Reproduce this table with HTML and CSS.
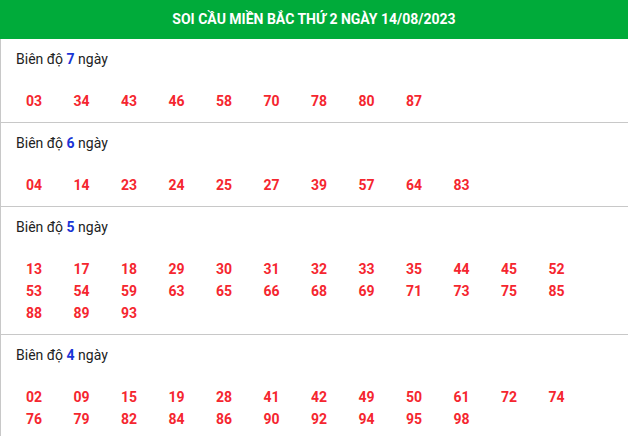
FILE: index.html
```html
<!DOCTYPE html>
<html lang="vi">
<head>
    <meta charset="UTF-8">
    <meta name="viewport" content="width=device-width, initial-scale=1.0">
    <title>Soi cầu miền Bắc</title>
    <link rel="stylesheet" href="styles.css">
</head>
<body>
    <div class="box">
        <h2 class="box-title">SOI CẦU MIỀN BẮC THỨ 2 NGÀY 14/08/2023</h2>
        <div class="range">
            <p class="range-label">Biên độ <b>7</b> ngày</p>
            <div class="nums">
                <span>03</span><span>34</span><span>43</span><span>46</span><span>58</span><span>70</span><span>78</span><span>80</span><span>87</span>
            </div>
        </div>
        <div class="range">
            <p class="range-label">Biên độ <b>6</b> ngày</p>
            <div class="nums">
                <span>04</span><span>14</span><span>23</span><span>24</span><span>25</span><span>27</span><span>39</span><span>57</span><span>64</span><span>83</span>
            </div>
        </div>
        <div class="range">
            <p class="range-label">Biên độ <b>5</b> ngày</p>
            <div class="nums">
                <span>13</span><span>17</span><span>18</span><span>29</span><span>30</span><span>31</span><span>32</span><span>33</span><span>35</span><span>44</span><span>45</span><span>52</span>
                <span>53</span><span>54</span><span>59</span><span>63</span><span>65</span><span>66</span><span>68</span><span>69</span><span>71</span><span>73</span><span>75</span><span>85</span>
                <span>88</span><span>89</span><span>93</span>
            </div>
        </div>
        <div class="range">
            <p class="range-label">Biên độ <b>4</b> ngày</p>
            <div class="nums">
                <span>02</span><span>09</span><span>15</span><span>19</span><span>28</span><span>41</span><span>42</span><span>49</span><span>50</span><span>61</span><span>72</span><span>74</span>
                <span>76</span><span>79</span><span>82</span><span>84</span><span>86</span><span>90</span><span>92</span><span>94</span><span>95</span><span>98</span>
            </div>
        </div>
    </div>
</body>
</html>
```

FILE: styles.css
```css
body {
    margin: 0;
    background-color: #fff;
    font-family: Roboto, "Liberation Sans", Arial, sans-serif;
    color: #222;
}

.box {
    width: 628px;
    border-left: 1px solid #c8c8c8;
    box-sizing: border-box;
}

.box-title {
    margin: 0 0 0 -1px;
    height: 39px;
    line-height: 39px;
    background-color: #00ab3a;
    color: #fff;
    font-size: 14px;
    font-weight: bold;
    text-align: center;
}

.range {
    padding: 10px 0 10px 15px;
    border-bottom: 1px solid #c8c8c8;
}

.range-label {
    margin: 0;
    line-height: 20px;
    font-size: 14px;
}

.range-label b {
    color: #1a35d6;
}

.nums {
    display: grid;
    grid-template-columns: repeat(12, 47.5px);
    margin-top: 21px;
    padding-left: 10px;
}

.nums span {
    line-height: 22px;
    font-size: 14px;
    font-weight: bold;
    color: #f5262f;
}
```
